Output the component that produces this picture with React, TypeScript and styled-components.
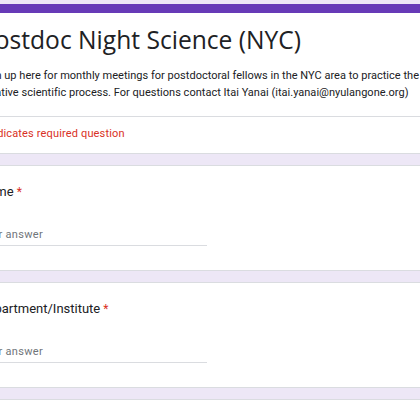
import React from "react";
import styled, { createGlobalStyle } from "styled-components";

const Global = createGlobalStyle`
  html, body { margin: 0; padding: 0; }
  body {
    background: #ede7f6;
    overflow: hidden;
    font-family: Roboto, "Liberation Sans", Arial, sans-serif;
    color: #202124;
  }
`;

const Page = styled.div`
  width: 520px;
  margin-left: -46px;
  padding-top: 4px;
  display: flex;
  flex-direction: column;
  gap: 11px;
`;

const Card = styled.section<{ $accent?: boolean }>`
  background: #fff;
  border: 1px solid #dadce0;
  border-top: ${(p) => (p.$accent ? "9px solid #673ab7" : "1px solid #dadce0")};
  border-radius: 8px;
  display: flex;
  flex-direction: column;
`;

const Header = styled.div`
  padding: 12px 24px 15px 25px;
  border-bottom: 1px solid #dadce0;
`;

const Title = styled.h1`
  margin: 0;
  font-family: "Open Sans", Roboto, sans-serif;
  font-weight: 400;
  font-size: 24.6px;
  line-height: 30px;
  letter-spacing: 0;
`;

const Description = styled.p`
  margin: 12px 0 0;
  font-size: 11px;
  line-height: 17px;
  letter-spacing: 0.02px;
  white-space: nowrap;
`;

const Required = styled.div`
  padding: 9px 25px 11px;
  font-size: 11px;
  line-height: 16px;
  color: #d93025;
  letter-spacing: 0.15px;
`;

const Question = styled.div`
  padding: 17px 24px 24px;
  display: flex;
  flex-direction: column;
`;

const Label = styled.div`
  font-size: 13px;
  line-height: 18px;
  letter-spacing: 0;
`;

const Star = styled.span`
  color: #d93025;
  margin-left: 3px;
  font-size: 12px;
`;

const Answer = styled.div`
  margin-top: 26px;
  width: 228px;
  font-size: 11px;
  line-height: 16px;
  color: #70757a;
  letter-spacing: 0.3px;
  padding-bottom: 2px;
  border-bottom: 1px solid #dadce0;
`;

export default function App() {
  return (
    <>
      <Global />
      <Page>
        <Card $accent>
          <Header>
            <Title>Postdoc Night Science (NYC)</Title>
            <Description>
              Sign up here for monthly meetings for postdoctoral fellows in the NYC area to practice the
              <br />
              creative scientific process. For questions contact Itai Yanai (itai.yanai@nyulangone.org)
            </Description>
          </Header>
          <Required>* Indicates required question</Required>
        </Card>
        <Card>
          <Question>
            <Label>
              Name<Star>*</Star>
            </Label>
            <Answer>Your answer</Answer>
          </Question>
        </Card>
        <Card>
          <Question>
            <Label>
              Department/Institute<Star>*</Star>
            </Label>
            <Answer>Your answer</Answer>
          </Question>
        </Card>
        <Card>
          <Question>
            <Label>Email</Label>
          </Question>
        </Card>
      </Page>
    </>
  );
}
